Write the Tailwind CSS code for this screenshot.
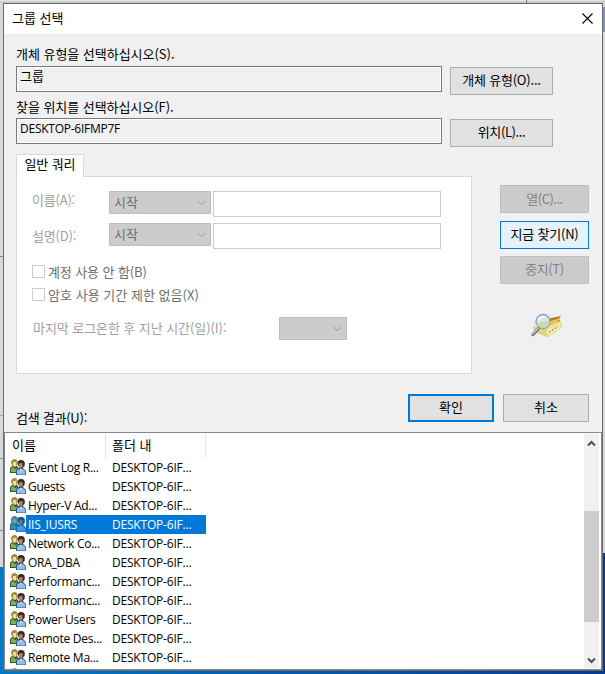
<!DOCTYPE html>
<html lang="ko">
<head>
<meta charset="utf-8">
<title>그룹 선택</title>
<script src="https://cdn.jsdelivr.net/npm/@tailwindcss/browser@4"></script>
</head>
<body class="relative h-[674px] w-[605px] overflow-hidden bg-[#d8d8d8] font-['Noto_Sans_CJK_KR','Noto_Sans',sans-serif] text-[13px] leading-[18px] text-black">
<!-- desktop and windows behind the dialog -->
<div class="absolute inset-x-0 top-0 h-[3px] bg-linear-to-b from-[#e8e8e8] to-[#bdbdbd]"></div>
<div class="absolute top-0 left-[526px] h-[3px] w-px bg-[#777]"></div>
<div class="absolute top-[7px] right-0 h-[25px] w-[3px] bg-[#8096b4]"></div>
<div class="absolute top-[256px] left-0 h-px w-[3px] bg-[#888]"></div>
<div class="absolute top-[415px] left-0 h-px w-[3px] bg-[#aaa]"></div>
<div class="absolute top-[458px] left-0 h-px w-[3px] bg-[#888]"></div>
<div class="absolute top-[530px] left-0 h-px w-[3px] bg-[#888]"></div>
<div class="absolute inset-x-0 top-[567px] bottom-0 bg-linear-to-r from-[#0078c8] to-[#063b91]"></div>
<div class="absolute top-[553px] right-0 h-[14px] w-[3px] bg-[#063b91]"></div>

<main class="relative mt-[3px] ml-[3px] flex h-[668px] w-[600px] flex-col border border-[#6b6b6b] bg-[#f0f0f0]">
  <header class="flex h-[30px] shrink-0 items-center justify-between bg-white pr-[9px] pb-[2px] pl-[8px]">
    <h1>그룹 선택</h1>
    <svg class="size-[11px]" viewBox="0 0 11 11" fill="none" stroke="#000" stroke-width="1.1"><path d="M.5.5l10 10M10.500.5l-10 10"/></svg>
  </header>

  <section class="flex h-[120px] shrink-0 pl-[12px]">
    <div class="w-[426px] pt-[11px]">
      <div class="h-[21px] tracking-[-0.03px]">개체 유형을 선택하십시오(S).</div>
      <div class="h-[26px] border border-[#7a7a7a] pl-[3px] leading-[17px] shadow-[inset_0_0_0_1px_#fff]">그룹</div>
      <div class="mt-[5px] h-[21px] pt-px tracking-[-0.05px]">찾을 위치를 선택하십시오(F).</div>
      <div class="h-[26px] border border-[#7a7a7a] pl-[3px] font-['Open_Sans',sans-serif] text-[12px] leading-[20px] tracking-[-0.25px] shadow-[inset_0_0_0_1px_#fff]">DESKTOP-6IFMP7F</div>
    </div>
    <div class="ml-[8px] flex flex-col gap-[24px] pt-[33px]">
      <button class="h-[28px] w-[103px] border border-[#adadad] bg-[#e1e1e1] pb-[2px] tracking-[-0.2px]">개체 유형(O)...</button>
      <button class="h-[28px] w-[103px] border border-[#adadad] bg-[#e1e1e1] pb-[2px] tracking-[-0.4px]">위치(L)...</button>
    </div>
  </section>

  <section class="flex h-[220px] shrink-0 pl-[12px]">
    <div class="w-[456px]">
      <div class="relative z-10 h-[23px] w-[68px] border border-b-0 border-[#d9d9d9] bg-white text-center leading-[18px] tracking-[-0.1px]">일반 쿼리</div>
      <div class="-mt-px h-[198px] border border-[#d9d9d9] bg-white pl-[15px] text-[#a0a0a0]">
        <div class="flex pt-[14px]">
          <div class="w-[77px] tracking-[-0.2px]">이름(A):</div>
          <div class="flex h-[23px] w-[102px] items-center justify-between border border-[#bfbfbf] bg-[#ccc] pr-[4px] pb-[2px] pl-[4px] text-[#6d6d6d]">시작<svg class="mt-[3px] h-[6px] w-[9px]" viewBox="0 0 9 6" fill="none" stroke="#999"><path d="M.5.7l4 4 4-4"/></svg></div>
          <div class="ml-[2px] h-[26px] w-[228px] border border-[#ccc]"></div>
        </div>
        <div class="flex pt-[6px]">
          <div class="w-[77px] pt-[4px] tracking-[-0.2px]">설명(D):</div>
          <div class="flex h-[23px] w-[102px] items-center justify-between border border-[#bfbfbf] bg-[#ccc] pr-[4px] pb-[2px] pl-[4px] text-[#6d6d6d]">시작<svg class="mt-[3px] h-[6px] w-[9px]" viewBox="0 0 9 6" fill="none" stroke="#999"><path d="M.5.7l4 4 4-4"/></svg></div>
          <div class="ml-[2px] h-[26px] w-[228px] border border-[#ccc]"></div>
        </div>
        <div class="mt-[11px] flex h-[23px] items-center text-[#6d6d6d]"><i class="mr-[3px] size-[13px] border border-[#ccc]"></i><span class="tracking-[-0.1px]">계정 사용 안 함(B)</span></div>
        <div class="flex h-[23px] items-center text-[#6d6d6d]"><i class="mr-[3px] size-[13px] border border-[#ccc]"></i><span class="tracking-[0.03px]">암호 사용 기간 제한 없음(X)</span></div>
        <div class="mt-[11px] flex items-center">
          <div class="w-[247px] pb-[2px] pl-[1px] tracking-[-0.07px]">마지막 로그온한 후 지난 시간(일)(I):</div>
          <div class="flex h-[23px] w-[68px] items-center justify-end border border-[#bfbfbf] bg-[#ccc] pr-[4px]"><svg class="mt-[1px] h-[6px] w-[9px]" viewBox="0 0 9 6" fill="none" stroke="#999"><path d="M.5.7l4 4 4-4"/></svg></div>
        </div>
      </div>
    </div>
    <div class="ml-[28px] flex w-[89px] flex-col pt-[31px]">
      <button class="h-[28px] border border-[#bfbfbf] bg-[#ccc] pb-px tracking-[-0.5px] text-[#838383]">열(C)...</button>
      <button class="mt-[8px] h-[28px] border border-[#0078d7] bg-[#e5f1fb] pb-[2px] tracking-[-0.2px]">지금 찾기(N)</button>
      <button class="mt-[7px] h-[28px] border border-[#bfbfbf] bg-[#ccc] pb-[2px] tracking-[-0.4px] text-[#838383]">중지(T)</button>
      <svg class="mt-[29px] ml-[30px] h-[26px] w-[34px]" viewBox="0 0 34 26">
        <path d="M3 11l11-6 17 3-15 9z" fill="#f1e8a4"/>
        <path d="M16 6l15-3-2 3 1 2-12 5z" fill="#b97f1d"/>
        <path d="M18 9l12-4-3 4-7 3z" fill="#f0c850"/>
        <path d="M3 13l14 3.500V24L4 19z" fill="#e0d47a"/>
        <path d="M16 16.500L31 9v6l-14 9z" fill="#f6eea8" stroke="#cabf70" stroke-width=".6"/>
        <path d="M19 19l9-5.500" stroke="#77704a" stroke-width="1.300" stroke-dasharray="1.500 1.800"/>
        <path d="M8.500 15.500L3 21.500" stroke="#686978" stroke-width="3.200" stroke-linecap="round"/>
        <path d="M8.300 15.200L2.800 21.200" stroke="#d6d7e5" stroke-width="1.200" stroke-linecap="round"/>
        <circle cx="13" cy="8.500" r="7" fill="#d3e7f3" stroke="#8fa5b6" stroke-width="1.400"/>
        <path d="M7.500 10.500c3-2.500 6-1.500 11.500-3-.5 4-3 7-6 7s-5-2-5.500-4z" fill="#d3d8a8"/>
        <path d="M8 7c2-4 6-4.500 8.500-3-3 0-5 1.500-8.500 3z" fill="#fff"/>
      </svg>
    </div>
  </section>

  <section class="flex h-[58px] shrink-0 pl-[12px]">
    <div class="w-[392px] pt-[35px] tracking-[-0.25px]">검색 결과(U):</div>
    <div class="flex gap-[9px] pt-[20px]">
      <button class="h-[28px] w-[86px] border-2 border-[#0078d7] bg-[#e1e1e1] pb-[3px]">확인</button>
      <button class="h-[28px] w-[86px] border border-[#adadad] bg-[#e1e1e1] pb-[3px]">취소</button>
    </div>
  </section>

  <section class="flex min-h-0 flex-1 justify-between border border-[#828790] bg-white pt-[1px] pr-[2px]">
    <div class="w-[201px] overflow-hidden">
      <div class="flex h-[24px] leading-[22px]">
        <div class="w-[101px] border-r border-[#e5e5e5] pl-[7px]">이름</div>
        <div class="w-[100px] border-r border-[#e5e5e5] pl-[6px]">폴더 내</div>
      </div>
      <div id="rows" class="font-['Open_Sans',sans-serif] text-[12px]"></div>
    </div>
    <div class="mb-px flex w-[15px] flex-col items-center bg-[#f0f0f0]">
      <svg class="mt-[6px] h-[7px] w-[9px]" viewBox="0 0 9 7" fill="none" stroke="#505050" stroke-width="2"><path d="M1 5.500l3.500-3.500 3.500 3.500"/></svg>
      <div class="mt-[64px] h-[111px] w-[15px] bg-[#cdcdcd]"></div>
      <svg class="mt-[35px] h-[7px] w-[9px]" viewBox="0 0 9 7" fill="none" stroke="#505050" stroke-width="2"><path d="M1 1.500l3.500 3.500 3.500-3.500"/></svg>
    </div>
  </section>
</main>

<template id="row">
  <div class="flex h-[19px] items-center pl-[5px] leading-[18px]">
    <svg class="mb-px h-[16px] w-[16px] shrink-0" viewBox="0 0 16 16">
      <path d="M0 14V9l2-2h5l2 3v4z" fill="#2f5a26"/>
      <path d="M1 13V9l2-1 2 2 2-1v4z" fill="#7db05c"/>
      <path d="M1 4C1 1 3 0 4.500 0S8 1 7.500 5L6 8H3z" fill="#a38b43"/>
      <path d="M3 3h3.200v3L5 8 3 6z" fill="#f2dca0"/>
      <path d="M6 16v-5l2-2h5l3 3v4z" fill="#345784"/>
      <path d="M7 15.500V11.500L9 10l2 2 2-2 2.300 2.500v3z" fill="#93bfec"/>
      <path d="M7.500 5c0-3 1-4 3.500-4 3 0 4.500 2 3.500 6l-2 2h-3z" fill="#3a2b25"/>
      <path d="M8.700 4.500l3.800-.5v3.500L11 9.500 9 7.500z" fill="#b5886a"/>
      <path d="M10 10h2l-1 3z" fill="#fff"/>
      <path class="tint hidden" d="M0 14V8l1-2V3l3-3 3 1 3 0 4 1 1 4-1 3 2 3v4H6l-1-2z" fill="#0078d7" fill-opacity=".55"/>
    </svg>
    <div class="name flex h-full w-[80px] items-center pl-[2px] tracking-[-0.25px] whitespace-nowrap"></div>
    <div class="folder flex h-full w-[100px] items-center pl-[6px] tracking-[-0.2px] whitespace-nowrap">DESKTOP-6IF...</div>
  </div>
</template>
<script>
const names = ['Event Log R...', 'Guests', 'Hyper-V Ad...', 'IIS_IUSRS', 'Network Co...', 'ORA_DBA', 'Performanc...', 'Performanc...', 'Power Users', 'Remote Des...', 'Remote Ma...', ''];
for (const n of names) {
  const row = document.getElementById('row').content.cloneNode(true);
  const name = row.querySelector('.name'), folder = row.querySelector('.folder');
  name.textContent = n;
  if (!n) folder.textContent = '';
  if (n === 'IIS_IUSRS') {
    name.classList.add('bg-[#0078d7]', 'text-white');
    folder.classList.add('bg-[#0078d7]', 'text-white');
    row.querySelector('.tint').classList.remove('hidden');
  }
  document.getElementById('rows').append(row);
}
</script>
</body>
</html>
